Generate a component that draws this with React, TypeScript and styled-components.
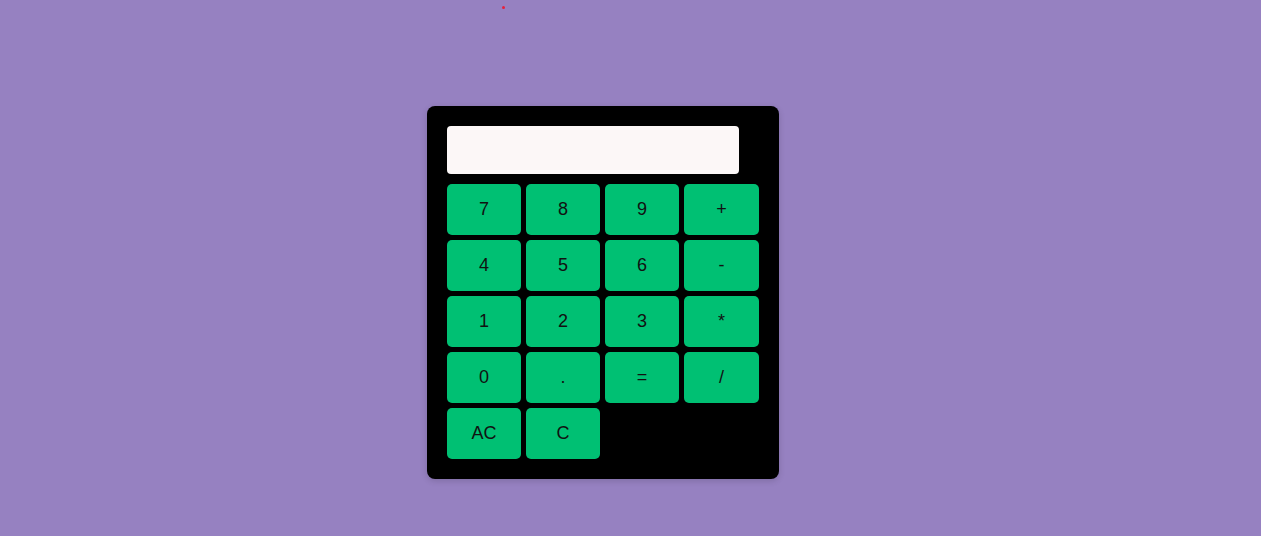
import React from "react";
import styled, { createGlobalStyle } from "styled-components";

const Global = createGlobalStyle`
  html, body { margin: 0; padding: 0; }
  body {
    background: #9681c1;
    font-family: "Liberation Sans", Arial, sans-serif;
    min-height: 536px;
  }
`;

const Page = styled.div`
  position: relative;
  padding: 106px 0 0 427px;
`;

const Dot = styled.span`
  position: absolute;
  left: 502px;
  top: 6px;
  width: 3px;
  height: 3px;
  border-radius: 50%;
  background: #e8203a;
`;

const Calculator = styled.div`
  width: 312px;
  padding: 20px;
  background: #000;
  border-radius: 8px;
  box-shadow: 0 2px 6px rgba(0, 0, 0, 0.15);
`;

const Display = styled.div`
  width: 292px;
  height: 48px;
  background: #fcf7f7;
  border-radius: 4px;
  margin-bottom: 10px;
`;

const Keys = styled.div`
  display: grid;
  grid-template-columns: 74px 74px 74px 75px;
  grid-auto-rows: 51px;
  column-gap: 5px;
  row-gap: 5px;
`;

const Key = styled.button`
  border: none;
  background: #00c073;
  border-radius: 5px;
  color: #111;
  font-family: "Liberation Sans", Arial, sans-serif;
  font-size: 18px;
  padding: 0;
  cursor: pointer;
`;

const keys = ["7", "8", "9", "+", "4", "5", "6", "-", "1", "2", "3", "*", "0", ".", "=", "/", "AC", "C"];

export default function App() {
  return (
    <>
      <Global />
      <Page>
        <Dot />
        <Calculator>
          <Display />
          <Keys>
            {keys.map((k) => (
              <Key key={k}>{k}</Key>
            ))}
          </Keys>
        </Calculator>
      </Page>
    </>
  );
}
